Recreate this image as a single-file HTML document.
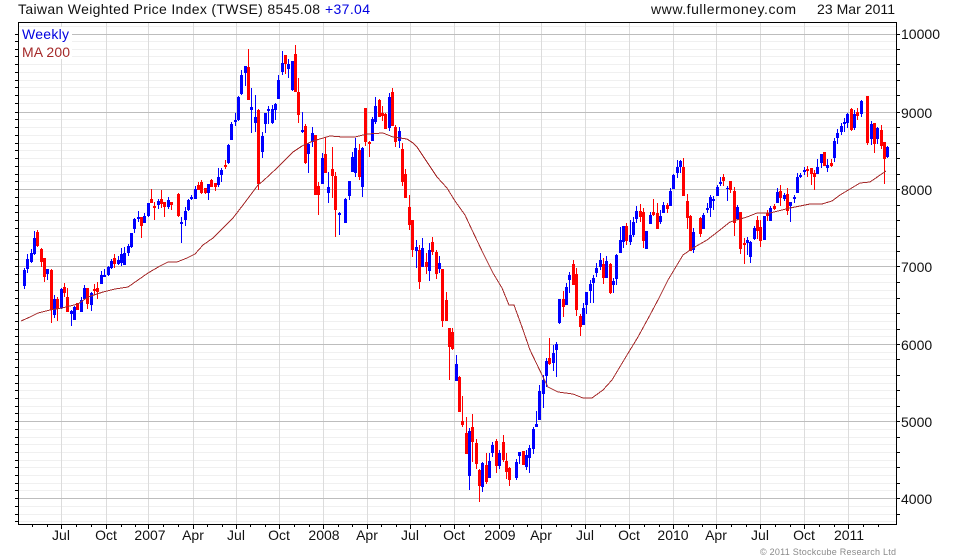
<!DOCTYPE html>
<html><head><meta charset="utf-8"><style>
html,body{margin:0;padding:0;background:#fff}
svg{display:block}
text{font-family:"Liberation Sans",Arial,sans-serif;font-size:14px;fill:#111}
</style></head><body>
<svg width="980" height="560" viewBox="0 0 980 560" xmlns="http://www.w3.org/2000/svg">
<rect width="980" height="560" fill="#fff"/>
<g shape-rendering="crispEdges" fill="none">
<path stroke="#f0f0f0" d="M19 26.5H896M19 41.5H896M19 49.5H896M19 56.5H896M19 64.5H896M19 72.5H896M19 80.5H896M19 87.5H896M19 95.5H896M19 103.5H896M19 119.5H896M19 127.5H896M19 135.5H896M19 143.5H896M19 150.5H896M19 158.5H896M19 166.5H896M19 174.5H896M19 181.5H896M19 197.5H896M19 205.5H896M19 212.5H896M19 220.5H896M19 228.5H896M19 236.5H896M19 243.5H896M19 251.5H896M19 259.5H896M19 274.5H896M19 282.5H896M19 290.5H896M19 298.5H896M19 305.5H896M19 313.5H896M19 321.5H896M19 329.5H896M19 336.5H896M19 352.5H896M19 359.5H896M19 367.5H896M19 375.5H896M19 383.5H896M19 390.5H896M19 398.5H896M19 406.5H896M19 413.5H896M19 429.5H896M19 437.5H896M19 444.5H896M19 452.5H896M19 460.5H896M19 467.5H896M19 475.5H896M19 483.5H896M19 490.5H896M19 506.5H896M19 514.5H896M19 521.5H896"/>
<path stroke="#dcdcdc" d="M61.5 22V525M106.5 22V525M148.5 22V525M193.5 22V525M236.5 22V525M279.5 22V525M323.5 22V525M367.5 22V525M410.5 22V525M454.5 22V525M499.5 22V525M541.5 22V525M585.5 22V525M629.5 22V525M673.5 22V525M716.5 22V525M760.5 22V525M804.5 22V525M848.5 22V525"/>
<path stroke="#bdbdbd" d="M19 34.5H896M19 112.5H896M19 189.5H896M19 266.5H896M19 344.5H896M19 421.5H896M19 498.5H896"/>
<rect x="19" y="27" width="53" height="32" fill="#fff"/>
<!-- blue wicks -->
<path stroke="#0000ff" stroke-width="1" d="M24.5 268V289M27.5 254V273M31.5 249V263M34.5 231V255M47.5 269V280M54.5 295V318M61.5 288V309M71.5 310V326M74.5 306V320M81.5 297V312M84.5 285V300M91.5 292V311M101.5 271V284M104.5 269V277M108.5 266V276M111.5 259V269M118.5 256V265M121.5 248V266M124.5 247V265M128.5 244V256M131.5 233V248M134.5 218V233M138.5 211V222M144.5 213V223M148.5 203V217M158.5 199V209M168.5 197V209M181.5 217V243M185.5 207V226M188.5 199V211M191.5 195V200M195.5 186V199M208.5 184V200M218.5 168V187M221.5 168V182M228.5 144V164M231.5 122V140M235.5 113V126M238.5 96V121M241.5 70V95M245.5 66V86M251.5 88V133M255.5 95V132M262.5 132V158M265.5 113V133M268.5 106V124M272.5 105V124M275.5 103V120M278.5 75V99M282.5 51V75M288.5 59V78M292.5 61V91M302.5 112V133M308.5 143V173M312.5 127V147M322.5 153V184M328.5 172V203M339.5 212V235M345.5 198V223M349.5 181V200M352.5 152V172M355.5 138V177M362.5 147V197M372.5 117V141M375.5 97V124M389.5 93V131M399.5 127V148M416.5 240V268M422.5 238V267M429.5 243V281M439.5 256V273M456.5 355V381M469.5 428V490M482.5 462V492M489.5 453V478M492.5 442V457M499.5 450V469M516.5 459V480M519.5 452V464M526.5 450V470M529.5 445V473M533.5 427V454M536.5 411V427M539.5 385V420M543.5 375V408M546.5 358V387M553.5 345V371M556.5 342V377M559.5 299V324M566.5 283V305M569.5 272V293M583.5 303V325M586.5 292V314M590.5 280V303M593.5 275V303M596.5 263V277M600.5 253V270M606.5 256V278M613.5 278V293M616.5 254V285M620.5 227V253M623.5 226V248M630.5 220V245M633.5 217V237M636.5 206V223M646.5 231V249M650.5 212V224M660.5 210V224M663.5 202V213M670.5 188V206M673.5 174V189M677.5 160V178M680.5 160V173M693.5 228V253M703.5 213V229M707.5 203V213M710.5 195V217M713.5 196V210M717.5 185V196M720.5 177V186M727.5 186V201M737.5 205V220M747.5 237V255M750.5 241V263M754.5 226V240M764.5 216V240M770.5 206V221M777.5 188V203M784.5 193V201M790.5 202V222M794.5 195V203M797.5 173V193M800.5 173V178M804.5 167V175M817.5 159V174M821.5 154V168M827.5 159V172M834.5 138V162M837.5 129V144M841.5 123V135M844.5 118V132M847.5 113V128M854.5 110V130M861.5 100V117M871.5 121V145M877.5 127V144M887.5 146V158"/>
<!-- blue bodies -->
<path stroke="#0000ff" stroke-width="3" d="M24.5 270V286M27.5 259V269M31.5 253V262M34.5 238V254M47.5 269V274M54.5 299V315M61.5 289V308M71.5 311V314M74.5 307V320M81.5 300V312M84.5 288V299M91.5 293V305M101.5 275V284M104.5 275V277M108.5 267V275M111.5 261V268M118.5 260V264M121.5 254V263M124.5 253V265M128.5 246V253M131.5 233V247M134.5 219V229M138.5 217V219M144.5 216V223M148.5 203V216M158.5 201V205M168.5 200V207M181.5 222V224M185.5 211V220M188.5 200V210M191.5 197V199M195.5 189V199M208.5 184V193M218.5 177V185M221.5 170V175M228.5 145V163M231.5 124V140M235.5 120V122M238.5 97V120M241.5 75V94M245.5 66V73M251.5 107V110M255.5 117V123M262.5 136V152M265.5 113V124M268.5 109V111M272.5 109V123M275.5 104V110M278.5 80V99M282.5 63V72M288.5 64V69M292.5 61V90M302.5 130V132M308.5 144V154M312.5 133V142M322.5 158V184M328.5 187V193M339.5 213V215M345.5 199V223M349.5 181V196M352.5 157V172M355.5 148V173M362.5 148V187M372.5 119V141M375.5 106V122M389.5 97V128M399.5 131V141M416.5 247V251M422.5 248V267M429.5 250V271M439.5 263V269M456.5 364V381M469.5 431V476M482.5 463V487M489.5 461V478M492.5 445V453M499.5 453V466M516.5 462V478M519.5 452V456M526.5 455V467M529.5 448V458M533.5 429V449M536.5 424V427M539.5 391V420M543.5 380V394M546.5 361V376M553.5 353V363M556.5 344V350M559.5 299V323M566.5 287V305M569.5 275V280M583.5 308V325M586.5 292V305M590.5 284V291M593.5 278V283M596.5 268V273M600.5 260V267M606.5 261V278M613.5 281V285M616.5 255V279M620.5 240V253M623.5 226V242M630.5 235V242M633.5 222V235M636.5 211V219M646.5 231V249M650.5 215V224M660.5 216V222M663.5 205V213M670.5 191V206M673.5 175V189M677.5 167V173M680.5 161V167M693.5 232V250M703.5 215V229M707.5 208V210M710.5 197V208M713.5 199V201M717.5 187V196M720.5 182V184M727.5 188V189M737.5 207V219M747.5 240V243M750.5 242V257M754.5 228V239M764.5 216V240M770.5 208V221M777.5 192V203M784.5 195V199M790.5 202V206M794.5 197V199M797.5 177V193M800.5 175V177M804.5 170V172M817.5 167V174M821.5 154V163M827.5 165V168M834.5 141V158M837.5 133V138M841.5 126V132M844.5 122V124M847.5 114V123M854.5 114V128M861.5 101V114M871.5 124V139M877.5 128V139M887.5 147V157"/>
<!-- red wicks -->
<path stroke="#ff0000" stroke-width="1" d="M37.5 230V247M41.5 248V267M44.5 258V282M51.5 269V323M57.5 297V321M64.5 283V297M67.5 288V312M77.5 303V310M87.5 288V309M94.5 284V295M97.5 282V299M114.5 254V268M141.5 217V238M151.5 189V203M154.5 202V220M161.5 190V208M164.5 202V217M171.5 202V210M178.5 193V217M198.5 182V190M201.5 180V194M205.5 188V194M211.5 179V187M215.5 183V191M225.5 160V169M248.5 49V100M258.5 109V190M285.5 55V74M295.5 45V92M298.5 78V123M305.5 124V164M315.5 135V195M318.5 182V215M325.5 138V173M332.5 147V198M335.5 172V237M359.5 144V180M365.5 108V146M369.5 141V157M379.5 99V117M382.5 106V121M385.5 113V129M392.5 88V126M395.5 125V147M402.5 143V186M405.5 169V198M409.5 195V230M412.5 220V257M419.5 245V289M426.5 253V274M432.5 237V255M436.5 250V279M442.5 269V327M446.5 292V321M449.5 328V380M452.5 328V350M459.5 376V412M462.5 396V427M466.5 417V454M472.5 414V462M476.5 439V469M479.5 469V502M486.5 453V484M496.5 439V473M503.5 435V462M506.5 453V479M509.5 467V486M523.5 451V465M549.5 338V365M563.5 291V317M573.5 260V285M576.5 268V316M580.5 314V336M603.5 258V284M610.5 263V294M626.5 223V245M640.5 204V222M643.5 208V248M653.5 199V216M657.5 203V229M667.5 203V213M683.5 158V196M687.5 194V229M690.5 215V251M700.5 217V237M723.5 174V186M730.5 181V193M734.5 187V236M740.5 212V254M744.5 238V264M757.5 216V239M760.5 220V247M767.5 210V221M774.5 204V210M780.5 185V206M787.5 188V215M807.5 166V177M811.5 168V185M814.5 170V190M824.5 152V166M831.5 159V167M851.5 108V131M857.5 108V120M867.5 96V145M874.5 123V153M881.5 125V149M884.5 142V184"/>
<!-- red bodies -->
<path stroke="#ff0000" stroke-width="3" d="M37.5 232V246M41.5 249V262M44.5 258V277M51.5 270V310M57.5 299V309M64.5 287V293M67.5 297V312M77.5 303V310M87.5 288V304M94.5 289V291M97.5 288V292M114.5 258V264M141.5 217V226M151.5 199V203M154.5 206V208M161.5 199V204M164.5 202V207M171.5 202V205M178.5 194V216M198.5 185V190M201.5 182V193M205.5 188V193M211.5 180V187M215.5 183V187M225.5 165V167M248.5 67V100M258.5 110V184M285.5 55V64M295.5 54V92M298.5 92V115M305.5 126V163M315.5 135V195M318.5 186V195M325.5 154V173M332.5 169V176M335.5 176V210M359.5 150V177M365.5 108V142M369.5 142V144M379.5 100V117M382.5 113V116M385.5 114V129M392.5 92V126M395.5 127V142M402.5 149V182M405.5 174V198M409.5 207V225M412.5 220V250M419.5 250V282M426.5 262V267M432.5 242V252M436.5 252V274M442.5 269V321M446.5 300V321M449.5 328V347M452.5 332V349M459.5 377V412M462.5 421V425M466.5 433V454M472.5 427V442M476.5 443V464M479.5 470V486M486.5 465V482M496.5 441V466M503.5 442V460M506.5 461V472M509.5 468V480M523.5 451V465M549.5 358V364M563.5 299V307M573.5 264V285M576.5 274V310M580.5 316V327M603.5 264V278M610.5 264V293M626.5 226V241M640.5 211V217M643.5 212V241M653.5 212V215M657.5 213V229M667.5 205V209M683.5 167V196M687.5 201V218M690.5 216V251M700.5 218V234M723.5 177V181M730.5 181V190M734.5 191V223M740.5 212V249M744.5 243V245M757.5 220V231M760.5 227V241M767.5 213V216M774.5 206V209M780.5 191V198M787.5 194V211M807.5 169V171M811.5 168V174M814.5 173V177M824.5 152V166M831.5 163V166M851.5 109V130M857.5 112V116M867.5 96V143M874.5 123V144M881.5 130V146M884.5 142V159"/>
<!-- MA 200 -->
<polyline stroke="#a52a2a" stroke-width="1" points="21,321 30,317 38,313 50,310 62,308 78,304 88,297 103,292 115,289 128,287 138,280 148,273 160,266 168,262 177,262 187,258 195,254 203,245 213,238 222,229 233,218 243,205 252,193 258,185 263,181 277,168 293,152 302,146 313,141 330,136 343,137 355,137 367,134 383,133 393,137 407,139 413,143 417,147 425,159 431,168 437,177 447,188 455,201 460,208 465,215 472,230 483,253 493,273 502,288 509,305 514,305 522,327 530,350 543,377 548,387 558,392 573,394 583,398 592,398 603,390 612,380 618,370 627,355 638,337 650,315 659,298 668,280 683,255 693,248 707,240 720,230 730,222 747,217 757,213 770,213 790,208 810,204 822,204 832,201 840,195 860,183 870,182 886,171"/>
<!-- frame -->
<path stroke="#000" stroke-width="1" d="M18.5 22V525M896.5 22V525M18 22.5H897M18 524.5H897"/>
<path stroke="#000" d="M15 34.5H19M15 41.5H19M15 49.5H19M15 56.5H19M15 64.5H19M15 72.5H19M15 80.5H19M15 87.5H19M15 95.5H19M15 103.5H19M15 112.5H19M15 119.5H19M15 127.5H19M15 135.5H19M15 143.5H19M15 150.5H19M15 158.5H19M15 166.5H19M15 174.5H19M15 181.5H19M15 189.5H19M15 197.5H19M15 205.5H19M15 212.5H19M15 220.5H19M15 228.5H19M15 236.5H19M15 243.5H19M15 251.5H19M15 259.5H19M15 266.5H19M15 274.5H19M15 282.5H19M15 290.5H19M15 298.5H19M15 305.5H19M15 313.5H19M15 321.5H19M15 329.5H19M15 336.5H19M15 344.5H19M15 352.5H19M15 359.5H19M15 367.5H19M15 375.5H19M15 383.5H19M15 390.5H19M15 398.5H19M15 406.5H19M15 413.5H19M15 421.5H19M15 429.5H19M15 437.5H19M15 444.5H19M15 452.5H19M15 460.5H19M15 467.5H19M15 475.5H19M15 483.5H19M15 490.5H19M15 498.5H19M15 506.5H19M15 514.5H19M15 521.5H19"/>
<path stroke="#000" d="M896 34.5H900M896 49.5H900M896 64.5H900M896 80.5H900M896 95.5H900M896 112.5H900M896 127.5H900M896 143.5H900M896 158.5H900M896 174.5H900M896 189.5H900M896 205.5H900M896 220.5H900M896 236.5H900M896 251.5H900M896 266.5H900M896 282.5H900M896 298.5H900M896 313.5H900M896 329.5H900M896 344.5H900M896 359.5H900M896 375.5H900M896 390.5H900M896 406.5H900M896 421.5H900M896 437.5H900M896 452.5H900M896 467.5H900M896 483.5H900M896 498.5H900M896 514.5H900"/>
<path stroke="#000" d="M61.5 525V529M106.5 525V529M148.5 525V529M193.5 525V529M236.5 525V529M279.5 525V529M323.5 525V529M367.5 525V529M410.5 525V529M454.5 525V529M499.5 525V529M541.5 525V529M585.5 525V529M629.5 525V529M673.5 525V529M716.5 525V529M760.5 525V529M804.5 525V529M848.5 525V529"/>
<path stroke="#000" d="M32.5 525V527M47.5 525V527M76.5 525V527M91.5 525V527M121.5 525V527M135.5 525V527M163.5 525V527M178.5 525V527M207.5 525V527M222.5 525V527M250.5 525V527M265.5 525V527M294.5 525V527M309.5 525V527M338.5 525V527M352.5 525V527M381.5 525V527M396.5 525V527M425.5 525V527M440.5 525V527M469.5 525V527M484.5 525V527M513.5 525V527M527.5 525V527M556.5 525V527M571.5 525V527M600.5 525V527M615.5 525V527M644.5 525V527M659.5 525V527M688.5 525V527M702.5 525V527M731.5 525V527M746.5 525V527M775.5 525V527M790.5 525V527M819.5 525V527M834.5 525V527M863.5 525V527M878.5 525V527"/>
</g>
<text x="18" y="14" textLength="302">Taiwan Weighted Price Index (TWSE) 8545.08</text>
<text x="325" y="14" textLength="45" style="fill:#0000e0">+37.04</text>
<text x="651" y="14" textLength="145">www.fullermoney.com</text>
<text x="817" y="14" textLength="78">23 Mar 2011</text>
<text x="22" y="39" textLength="47" style="fill:#0000e0">Weekly</text>
<text x="22" y="57" textLength="48" style="fill:#a52a2a">MA 200</text>
<g>
<text x="901" y="39" textLength="39">10000</text>
<text x="901" y="118">9000</text>
<text x="901" y="195">8000</text>
<text x="901" y="272">7000</text>
<text x="901" y="350">6000</text>
<text x="901" y="427">5000</text>
<text x="901" y="504">4000</text>
</g>
<g text-anchor="middle">
<text x="61" y="540">Jul</text>
<text x="106" y="540">Oct</text>
<text x="150" y="540">2007</text>
<text x="193" y="540">Apr</text>
<text x="236" y="540">Jul</text>
<text x="279" y="540">Oct</text>
<text x="324" y="540">2008</text>
<text x="367" y="540">Apr</text>
<text x="410" y="540">Jul</text>
<text x="454" y="540">Oct</text>
<text x="500" y="540">2009</text>
<text x="541" y="540">Apr</text>
<text x="585" y="540">Jul</text>
<text x="629" y="540">Oct</text>
<text x="673" y="540">2010</text>
<text x="716" y="540">Apr</text>
<text x="760" y="540">Jul</text>
<text x="804" y="540">Oct</text>
<text x="849" y="540">2011</text>
</g>
<text x="760" y="555" textLength="136" style="font-size:9px;fill:#8a8a8a">© 2011 Stockcube Research Ltd</text>
</svg>
</body></html>
